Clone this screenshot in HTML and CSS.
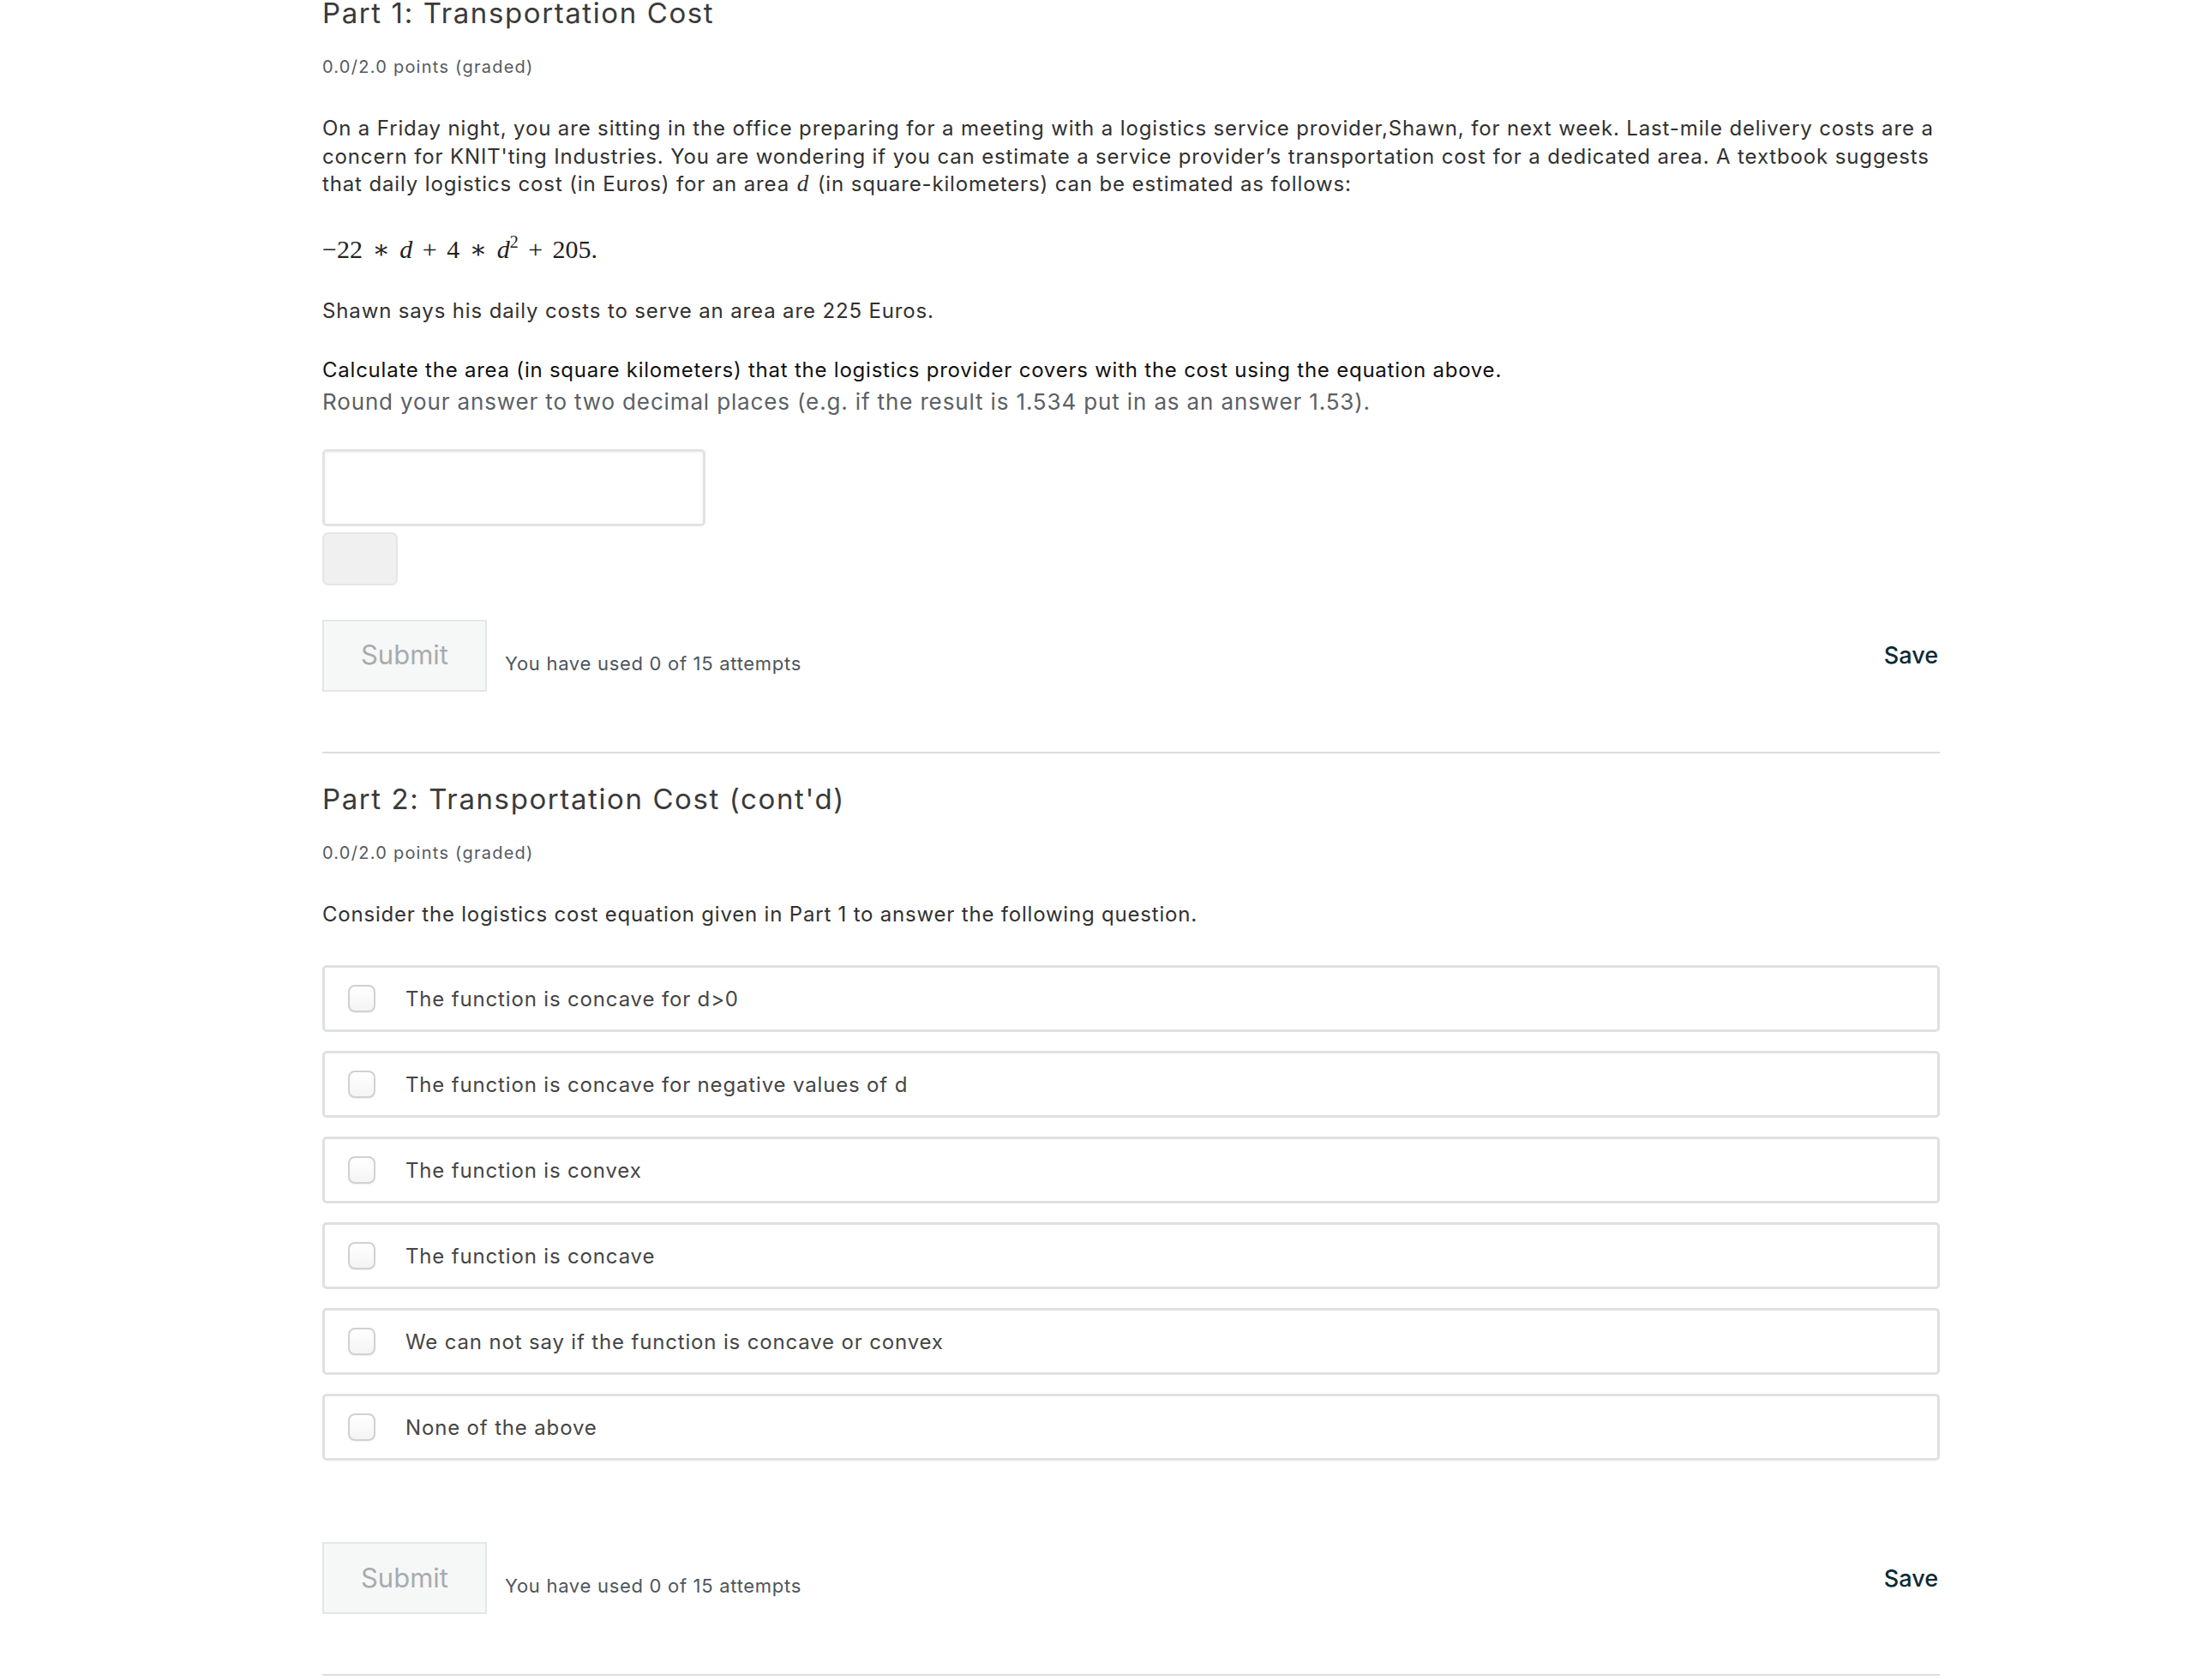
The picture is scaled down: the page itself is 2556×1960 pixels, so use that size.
FILE: index.html
```html
<!DOCTYPE html>
<html lang="en">
<head>
<meta charset="utf-8">
<title>Transportation Cost</title>
<link rel="stylesheet" href="styles.css">
</head>
<body>
<main class="page">
  <section class="problem">
    <h2 class="problem-title">Part 1: Transportation Cost</h2>
    <div class="points">0.0/2.0 points (graded)</div>
    <p class="para"><span class="ln">On a Friday night, you are sitting in the office preparing for a meeting with a logistics service provider,Shawn, for next week. Last-mile delivery costs are a </span><span class="ln">concern for KNIT'ting Industries. You are wondering if you can estimate a service provider’s transportation cost for a dedicated area. A textbook suggests </span><span class="ln">that daily logistics cost (in Euros) for an area </span><span class="mvar inline">d</span><span class="ln"> (in square-kilometers) can be estimated as follows:</span></p>
    <div class="formula">−22 <span class="op">∗</span> <span class="mvar">d</span> <span class="op">+</span> 4 <span class="op">∗</span> <span class="mvar">d</span><sup class="sup">2</sup> <span class="op">+</span> 205.</div>
    <p class="para shawn">Shawn says his daily costs to serve an area are 225 Euros.</p>
    <p class="para question">Calculate the area (in square kilometers) that the logistics provider covers with the cost using the equation above.</p>
    <p class="hint">Round your answer to two decimal places (e.g. if the result is 1.534 put in as an answer 1.53).</p>
    <div class="answer-input"></div>
    <div class="status-box"></div>
    <div class="action-row">
      <div class="submit">Submit</div>
      <div class="attempts">You have used 0 of 15 attempts</div>
      <div class="save">Save</div>
    </div>
  </section>
  <hr class="divider">
  <section class="problem">
    <h2 class="problem-title title2">Part 2: Transportation Cost (cont'd)</h2>
    <div class="points">0.0/2.0 points (graded)</div>
    <p class="para consider">Consider the logistics cost equation given in Part 1 to answer the following question.</p>
    <div class="options">
      <div class="option"><span class="check"></span><span class="opt-text">The function is concave for d&gt;0</span></div>
      <div class="option"><span class="check"></span><span class="opt-text">The function is concave for negative values of d</span></div>
      <div class="option"><span class="check"></span><span class="opt-text">The function is convex</span></div>
      <div class="option"><span class="check"></span><span class="opt-text">The function is concave</span></div>
      <div class="option"><span class="check"></span><span class="opt-text">We can not say if the function is concave or convex</span></div>
      <div class="option"><span class="check"></span><span class="opt-text">None of the above</span></div>
    </div>
    <div class="action-row row2">
      <div class="submit">Submit</div>
      <div class="attempts">You have used 0 of 15 attempts</div>
      <div class="save">Save</div>
    </div>
  </section>
  <hr class="divider divider2">
</main>
</body>
</html>
```

FILE: styles.css
```css
html, body {
  margin: 0;
  padding: 0;
  background: #ffffff;
}
body {
  font-family: "Inter", "Noto Sans", "Liberation Sans", sans-serif;
  color: #313131;
  overflow: hidden;
}
.page {
  margin-left: 376px;
  width: 1887px;
}
.problem-title {
  margin: -4px 0 0 0;
  font-size: 33px;
  line-height: 38px;
  font-weight: 400;
  letter-spacing: 1.6px;
  color: #3a3a3a;
}
.title2 {
  margin-top: 34px;
}
.points {
  margin-top: 32px;
  font-size: 20px;
  line-height: 24px;
  letter-spacing: 1.25px;
  color: #555a5f;
}
.para {
  margin: 44px 0 0 0;
  font-size: 24px;
  line-height: 32.5px;
  letter-spacing: 0.86px;
  color: #313131;
}
.mvar {
  font-family: "Liberation Serif", "DejaVu Serif", serif;
  font-style: italic;
  font-size: 27px;
  line-height: 1;
  letter-spacing: 0;
}
.mvar.inline {
  display: inline-block;
  padding: 0 3px 0 1px;
}
.formula {
  margin-top: 39px;
  height: 40px;
  line-height: 40px;
  font-family: "Liberation Serif", "DejaVu Serif", serif;
  font-size: 30px;
  color: #222;
}
.formula .op {
  margin: 0 4px;
}
.formula .mvar {
  font-size: 30px;
}
.sup {
  font-size: 20px;
  line-height: 0;
  vertical-align: 12px;
}
.shawn {
  margin-top: 36px;
}
.question {
  margin-top: 37px;
  color: #111;
  letter-spacing: 0.77px;
}
.hint {
  margin: 2px 0 0 0;
  font-size: 26px;
  line-height: 36px;
  letter-spacing: 0.86px;
  color: #5b6166;
}
.answer-input {
  margin-top: 37px;
  width: 447px;
  height: 90px;
  box-sizing: border-box;
  border: 3px solid #e2e3e4;
  border-radius: 5px;
  box-shadow: inset 0 1px 4px rgba(0,0,0,0.06);
  background: #fff;
}
.status-box {
  margin-top: 7px;
  width: 88px;
  height: 62px;
  box-sizing: border-box;
  border: 2px solid #e6e6e6;
  border-radius: 7px;
  background: #f0f0f0;
}
.action-row {
  margin-top: 40px;
  display: flex;
  align-items: center;
  height: 84px;
}
.submit {
  width: 192px;
  height: 84px;
  box-sizing: border-box;
  border: 2px solid #e5e6e6;
  background: #f6f7f7;
  color: #a9abad;
  font-size: 31px;
  display: flex;
  align-items: center;
  justify-content: center;
  padding-bottom: 2px;
}
.attempts {
  margin-left: 21px;
  margin-top: 18px;
  font-size: 22px;
  letter-spacing: 0.7px;
  color: #4d565d;
}
.save {
  margin-left: auto;
  margin-right: 2px;
  font-size: 27px;
  font-weight: 500;
  color: #0d2a33;
}
.divider {
  margin: 70px 0 0 0;
  border: 0;
  height: 2px;
  background: #dddddd;
}
.consider {
  margin-top: 44px;
  letter-spacing: 0.8px;
}
.options {
  margin-top: 43px;
  display: flex;
  flex-direction: column;
  gap: 22px;
}
.option {
  height: 78px;
  box-sizing: border-box;
  border: 3px solid #dfe0e1;
  border-radius: 5px;
  display: flex;
  align-items: center;
  padding-left: 27px;
}
.check {
  width: 32px;
  height: 32px;
  box-sizing: border-box;
  border: 2px solid #cfd1d3;
  border-radius: 8px;
  background: linear-gradient(#ffffff, #f4f4f4);
  box-shadow: 0 1px 1px rgba(0,0,0,0.06);
  flex: none;
}
.opt-text {
  margin-left: 35px;
  font-size: 24px;
  letter-spacing: 0.84px;
  color: #454545;
}
.row2 {
  margin-top: 95px;
}
.divider2 {
  margin-top: 70px;
}
```
